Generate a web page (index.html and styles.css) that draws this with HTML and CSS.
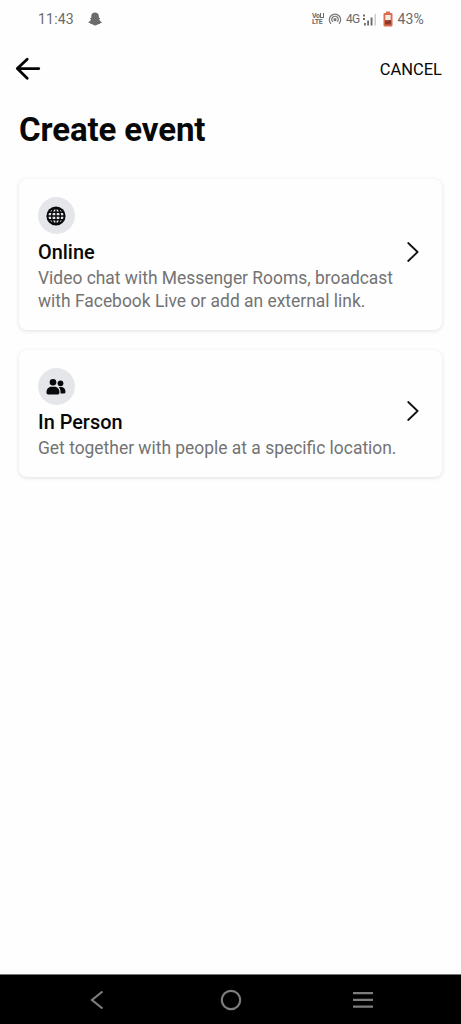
FILE: index.html
```html
<!DOCTYPE html>
<html lang="en">
<head>
<meta charset="utf-8">
<title>Create event</title>
<link rel="stylesheet" href="styles.css">
</head>
<body>
<div class="screen">
  <div class="status">
    <span class="time">11:43</span>
    <svg class="ghost" width="14" height="14" viewBox="0 0 14 14"><path fill="#6b6b6b" d="M7 .5C9.200.5 10.900 2 10.900 4.200V6l1.200-.1c.3.500-.2.900-.9 1.300.4 1.300 1.200 2.200 2.600 2.700.1.800-.7 1-1.600 1.200l-.4 1c-1.300-.1-1.900.1-2.600.6-1.300.9-2.700.9-4 0-.700-.5-1.300-.7-2.600-.6l-.4-1C1.100 10.900.3 10.700.4 9.900 1.800 9.400 2.600 8.500 3 7.200 2.300 6.800 1.800 6.400 2.100 5.900L3.200 6V4.200C3.200 2 4.800.5 7 .5z"/></svg>
    <span class="volte"><span>Vo<i></i></span><span>LTE</span></span>
    <svg class="hotspot" width="14" height="14" viewBox="0 0 14 14" fill="none" stroke="#777" stroke-width="1.200"><path d="M3 11.800a5.700 5.700 0 1 1 8 0M4.700 9.900a3.300 3.300 0 1 1 4.600 0"/><circle cx="7" cy="7.700" r="1" fill="#777"/></svg>
    <span class="net">4G</span>
    <svg class="signal" width="14" height="13" viewBox="0 0 14 13"><path fill="#6c6c6c" d="M0 1.500h2v2H0zM0 5h2v2H0zM1 10h1.800v2.500H1zM4.200 7.500H6v5H4.200zM7.600 4.500h1.900v8H7.600z"/><path fill="#ccc" d="M11.500 1H13v11.500h-1.500z"/></svg>
    <svg class="battery" width="10" height="16" viewBox="0 0 10 16"><path fill="#d96b4f" d="M3 .5h4V2h1.300q1.200 0 1.200 1.200v11q0 1.300-1.200 1.300H1.700Q.5 15.500.5 14.200v-11Q.5 2 1.700 2H3z"/><path fill="#f8e9e3" d="M2.300 4h5.400v5H2.300z"/><path fill="#8b3a2c" d="M2 9l2 1 1.500-1L8 9.300v4.200H2z"/></svg>
    <span class="percent">43%</span>
  </div>
  <div class="toolbar">
    <svg width="26" height="24" viewBox="0 0 26 24" fill="none" stroke="#050505" stroke-width="2.800" stroke-linecap="round" stroke-linejoin="round"><path d="M12.200 2.200 2.300 11.600l9.900 9.600M3 11.600h20.800"/></svg>
    <span class="cancel">CANCEL</span>
  </div>
  <h1 class="title">Create event</h1>
  <div class="cards">
    <div class="card online">
      <div class="info">
        <div class="badge"><svg width="20" height="20" viewBox="0 0 20 20"><circle cx="10" cy="10" r="9.600" fill="#08090a"/><g fill="#e4e6e9"><path d="M7.100 5.500h2.200V3q-1.500.5-2.200 2.500zM10.700 3v2.500h2.200Q12.200 3.500 10.700 3zM6.700 7.100h2.600v2.200H6.500zM10.700 7.100h2.600l.2 2.200h-2.800zM6.500 10.700h2.800v2.200H6.700zM10.700 10.700h2.800l-.2 2.200h-2.600zM7.100 14.500h2.200V17q-1.500-.5-2.200-2.500zM10.700 17v-2.500h2.200q-.7 2-2.200 2.500zM3.200 7.100h2L5 9.300H2.600q0-1.200.6-2.200zM14.800 7.100h2q.6 1 .6 2.200H15zM2.600 10.700H5l.2 2.200h-2q-.6-1-.6-2.200zM15 10.700h2.400q0 1.200-.6 2.200h-2zM4.200 5.500Q5 4.500 6.200 3.800l-.7 1.700zM13.800 3.800q1.200.7 2 1.700h-1.300zM4.200 14.500h1.300l.7 1.700q-1.200-.7-2-1.700zM14.500 14.500h1.300q-.8 1-2 1.700z"/></g></svg></div>
        <h2>Online</h2>
        <p>Video chat with Messenger Rooms, broadcast<br>with Facebook Live or add an external link.</p>
      </div>
      <svg class="chevron" width="12" height="22" viewBox="0 0 12 22" fill="none" stroke="#111" stroke-width="1.800" stroke-linecap="round" stroke-linejoin="round"><path d="m1.200 2 9.400 9-9.400 9"/></svg>
    </div>
    <div class="card person">
      <div class="info">
        <div class="badge"><svg width="20" height="18" viewBox="0 0 20 18" fill="#08090a"><circle cx="7" cy="4.300" r="3.300"/><path d="M.5 14.200C.5 11 2.700 8.700 5.200 8.700h3.500c2.700 0 4.700 2.300 4.700 5.500 0 1.600-.5 2.200-1.600 2.200H2.100C1 16.400.5 15.800.5 14.200z"/><circle cx="14.500" cy="5.300" r="2.900"/><path d="M12.800 9.100h2.400c2.400 0 4.300 2 4.300 4.600 0 1.200-.4 1.700-1.300 1.700h-3.600c0-2.500-.5-4.800-1.800-6.300z"/></svg></div>
        <h2>In Person</h2>
        <p>Get together with people at a specific location.</p>
      </div>
      <svg class="chevron" width="12" height="22" viewBox="0 0 12 22" fill="none" stroke="#111" stroke-width="1.800" stroke-linecap="round" stroke-linejoin="round"><path d="m1.200 2 9.400 9-9.400 9"/></svg>
    </div>
  </div>
  <div class="navbar">
    <svg width="14" height="20" viewBox="0 0 14 20" fill="none" stroke="#7d7d7d" stroke-width="2.200"><path d="M12.500 1.500 2 10l10.500 8.500"/></svg>
    <svg class="home" width="22" height="22" viewBox="0 0 22 22" fill="none" stroke="#7d7d7d" stroke-width="2.200"><circle cx="11" cy="11" r="9.200"/></svg>
    <svg width="22" height="18" viewBox="0 0 22 18"><path fill="#7d7d7d" d="M1 1h20v2.300H1zM1 7.700h20V10H1zM1 14.400h20v2.300H1z"/></svg>
  </div>
</div>
</body>
</html>
```
FILE: styles.css
```css
* { box-sizing: border-box; margin: 0; padding: 0; }
body { font-family: Roboto, "Liberation Sans", sans-serif; background: #fefefe; color: #080808; }
svg { display: block; flex: none; }
.screen { height: 1024px; display: flex; flex-direction: column; overflow: hidden; }
.status { height: 38px; padding: 0 37px 0 38px; display: flex; align-items: center; color: #6b6b6b; white-space: nowrap; }
.time { font-size: 14px; letter-spacing: 0.2px; }
.ghost { margin-left: 14px; }
.volte { margin-left: auto; width: 13px; display: flex; flex-direction: column; font-size: 7px; line-height: 6.500px; font-weight: 700; letter-spacing: -0.2px; }
.volte i { display: inline-block; width: 4px; height: 5px; margin-left: 0.5px; border: solid #6b6b6b; border-width: 0 1px 1px; }
.hotspot { margin-left: 3px; }
.net { margin-left: 4px; font-size: 12px; letter-spacing: -0.7px; }
.signal { margin-left: 4px; }
.battery { margin-left: 6px; }
.percent { margin-left: 4px; font-size: 14px; letter-spacing: 0.2px; }
.toolbar { height: 62px; padding: 0 19px 0 15px; display: flex; align-items: center; justify-content: space-between; }
.cancel { font-size: 16.500px; }
.title { padding-left: 19px; margin-top: 10px; font-size: 33px; line-height: 40px; font-weight: 700; letter-spacing: -0.1px; }
.cards { flex: 1; display: flex; flex-direction: column; gap: 20px; padding: 29px 19px 0; }
.card { display: flex; justify-content: space-between; align-items: center; padding: 0 23px 5px 19px; border-radius: 8px; background: #fefefe; box-shadow: 0 1px 4px rgba(0, 0, 0, 0.12); }
.online { height: 151px; }
.person { height: 127px; }
.info { align-self: flex-start; padding-top: 18px; white-space: nowrap; }
.badge { width: 37px; height: 37px; margin-left: -0.5px; border-radius: 50%; background: #e4e6e9; display: flex; align-items: center; justify-content: center; }
.card h2 { margin-top: 4px; font-size: 19.900px; line-height: 27px; font-weight: 500; }
.online h2 { margin-top: 5px; }
.card p { font-size: 17.430px; line-height: 23px; color: #737373; padding-top: 1px; }
.chevron { margin-left: -20px; }
.navbar { height: 50px; border-top: 1px solid #777; background: #000; display: flex; align-items: center; justify-content: space-between; padding: 0 87px 0 90px; }
.home { margin-left: 5px; }
```
